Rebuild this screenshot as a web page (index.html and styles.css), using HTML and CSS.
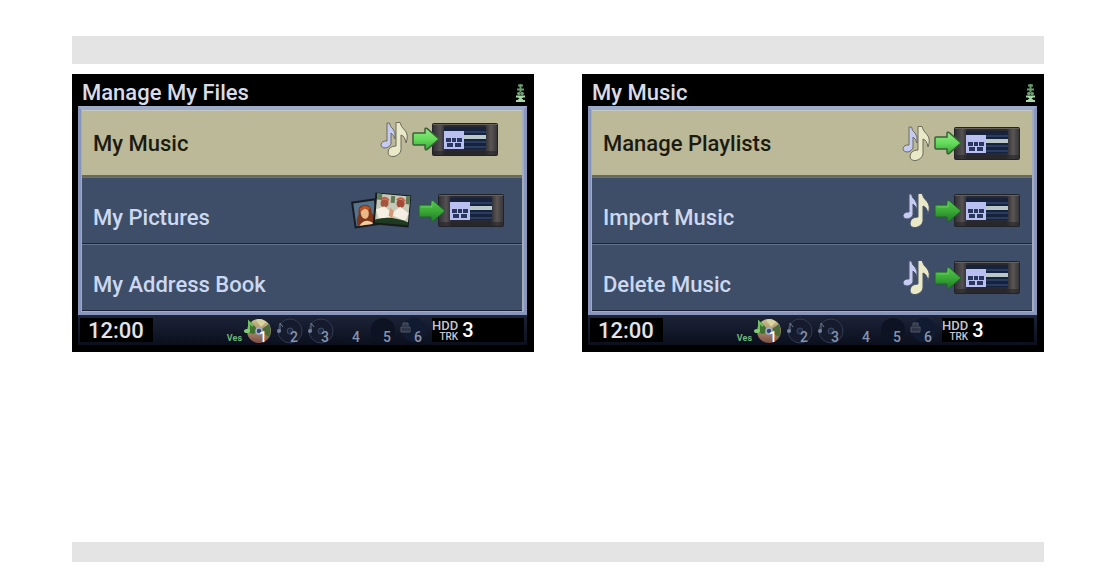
FILE: index.html
```html
<!DOCTYPE html>
<html lang="en">
<head>
  <meta charset="UTF-8">
  <meta name="viewport" content="width=device-width, initial-scale=1">
  <title>Manage My Files</title>
  <link rel="stylesheet" href="styles.css">
</head>
<body>
  <!-- Shared icons -->
  <svg class="sprite" aria-hidden="true">
    <defs>
      <linearGradient id="metal" x1="0" x2="1" y1="0" y2="0">
        <stop offset="0" stop-color="#2f2f34"/>
        <stop offset="0.12" stop-color="#555153"/>
        <stop offset="0.2" stop-color="#292a31"/>
        <stop offset="0.8" stop-color="#292a31"/>
        <stop offset="0.9" stop-color="#5b5654"/>
        <stop offset="1" stop-color="#343337"/>
      </linearGradient>
      <linearGradient id="leaf" x1="0" x2="0" y1="0" y2="1">
        <stop offset="0" stop-color="#55c24e"/>
        <stop offset="0.5" stop-color="#3aa936"/>
        <stop offset="1" stop-color="#1e7a24"/>
      </linearGradient>
      <linearGradient id="leaf-light" x1="0" x2="0" y1="0" y2="1">
        <stop offset="0" stop-color="#8fe884"/>
        <stop offset="0.5" stop-color="#66dd5c"/>
        <stop offset="1" stop-color="#39a337"/>
      </linearGradient>
      <linearGradient id="disc-face" x1="0" x2="0" y1="0" y2="1">
        <stop offset="0" stop-color="#c9c58e"/>
        <stop offset="0.5" stop-color="#a98a6c"/>
        <stop offset="1" stop-color="#7c4f45"/>
      </linearGradient>
    </defs>
    <symbol id="drive" viewBox="0 0 66 33">
      <rect x="0.5" y="0.5" width="65" height="32" rx="1" fill="url(#metal)" stroke="#222329"/>
      <path d="M1 1.5h64" stroke="#65615f"/>
      <path d="M1 28h64v4H1z" fill="#28272a" opacity=".65"/>
      <rect x="12" y="4" width="42" height="22" fill="#17233d"/>
      <path d="M32 9h22M32 19h22M32 24h22" stroke="#2b3c61" stroke-width="2"/>
      <path d="M31 14h23" stroke="#b9c7c8" stroke-width="4"/>
      <rect x="12" y="8" width="20" height="18" fill="#b9bff0"/>
      <path d="M14 15h5v4h-5zM20 15h4v4h-4zM25 15h5v4h-5zM15 20h6v4h-6zM23 20h6v4h-6z" fill="#29375f"/>
    </symbol>
    <symbol id="arrow" viewBox="0 0 30 24">
      <path d="M2 7Q2 6 3 6H14V2.500Q14 0.500 16 1.500L28 12L16 22.500Q14 23.500 14 21V18H3Q2 18 2 17Z" fill="url(#leaf)" stroke="#275c35"/>
      <path d="M4 8h11V4" fill="none" stroke="#7bdd72" stroke-width="1" opacity=".6"/>
    </symbol>
    <symbol id="arrow-light" viewBox="0 0 30 24">
      <path d="M2 7Q2 6 3 6H14V2.500Q14 0.500 16 1.500L28 12L16 22.500Q14 23.500 14 21V18H3Q2 18 2 17Z" fill="url(#leaf-light)" stroke="#3b6037" stroke-width="1.500"/>
    </symbol>
    <symbol id="notes" viewBox="0 0 30 37">
      <g class="note-small">
        <path d="M7 20V2H9.500Q10 6 13 8Q16 11 15 18Q14 14 11 12V23Q10 26 6 27Q1 27 1 23.500Q2 19.500 7 20Z"/>
      </g>
      <g class="note-large">
        <path d="M16 25V1.500H20Q21 6 25 9.500Q29 14 26 22Q25 15 21 14V29Q20 34 14 35.500Q8 36 8 31Q9 25 16 25Z"/>
      </g>
    </symbol>
    <symbol id="photos" viewBox="0 0 62 38">
      <g transform="rotate(-8 14 23)">
        <rect x="3" y="8" width="24" height="27" fill="#171c22"/>
        <rect x="5" y="10" width="21" height="23" fill="#56748e"/>
        <path d="M6 33Q5 27 9 21Q8 13 15 13Q23 13 22 22Q27 29 26 33Z" fill="#7c371d"/>
        <ellipse cx="15" cy="21" rx="4" ry="6" fill="#eab886"/>
        <path d="M8 33Q15 25 23 33Z" fill="#f1cf9c"/>
        <path d="M11 18Q15 13 20 18" stroke="#b75728" stroke-width="3" fill="none"/>
      </g>
      <g transform="rotate(5 43 18)">
        <rect x="24" y="2" width="36" height="32" fill="#171b1b"/>
        <rect x="26" y="3" width="33" height="27" fill="#c5c9b8"/>
        <path d="M26 3h5v6h-5zM55 3h4v8h-4zM40 4h4v7h-4z" fill="#5d7855"/>
        <circle cx="34" cy="12" r="4" fill="#a3553e"/>
        <circle cx="50" cy="11" r="4" fill="#a34a36"/>
        <path d="M30 9Q34 4 38 9M46 8Q50 3 54 8" stroke="#c75a41" stroke-width="2" fill="none"/>
        <path d="M26 19L34 15L42 21L50 14L59 20L56 28L44 24L30 29Z" fill="#f4eee3"/>
        <path d="M40 16l4 3-1 7-4-2z" fill="#d59a79"/>
        <path d="M26 29Q41 23 59 29V32H26Z" fill="#1e3a20"/>
      </g>
    </symbol>
    <symbol id="signal" viewBox="0 0 9 18">
      <path d="M2 1.500h5M4.500 0v4M1 5.500h7M4.500 4v4M1 9.500h7M3 8v3M6 8v3" stroke="#6b9c70" stroke-width="2"/>
      <path d="M0 12.500h9M0 17h9M2 12l5 5M7 12l-5 5" stroke="#a5d9a5" stroke-width="2"/>
    </symbol>
    <symbol id="disc" viewBox="0 0 31 28">
      <circle cx="15" cy="15" r="12" fill="#151b2c" stroke="#303a52"/>
      <circle cx="15" cy="15" r="3" fill="#1c2740" stroke="#3d4b67"/>
      <path d="M5 15V7l3 4" stroke="#6f7d91" fill="none"/>
      <ellipse cx="4" cy="15" rx="2" ry="2" fill="#73849d"/>
    </symbol>
    <symbol id="disc-active" viewBox="0 0 31 28">
      <circle cx="15" cy="15" r="12" fill="url(#disc-face)"/>
      <path d="M15 15L7 6Q3 10 3 16L9 18Z" fill="#42702f"/>
      <path d="M15 15L25 8Q28 15 25 21Z" fill="#4a6c3a"/>
      <path d="M12 4Q17 1 22 6L17 11Z" fill="#d8d3a1"/>
      <circle cx="15" cy="15" r="3" fill="#33436d" stroke="#a9b0d0" stroke-width="1.500"/>
      <path d="M5 15V6l4 4" stroke="#75bd62" stroke-width="2" fill="none"/>
      <ellipse cx="3" cy="15" rx="3" ry="2" fill="#7fce74"/>
    </symbol>
    <symbol id="slot-empty" viewBox="0 0 31 28">
      <circle cx="15" cy="14" r="12" fill="#0d1322"/>
    </symbol>
    <symbol id="slot-card" viewBox="0 0 31 28">
      <circle cx="15" cy="14" r="12" fill="#101a30"/>
      <path d="M2 16V11h9v5zM4 10V7h5v3" fill="#343a4b" stroke="#4f5564"/>
      <path d="M4 12v3M7 12v3M10 12v3" stroke="#262c3b"/>
    </symbol>
  </svg>

  <div class="rule"></div>

  <main class="screens">
    <section class="screen files">
      <header class="screen-title">
        <h2>Manage My Files</h2>
        <svg class="signal"><use href="#signal"/></svg>
      </header>
      <div class="menu">
        <button class="active">
          <span>My Music</span>
          <span class="transfer">
            <svg class="notes"><use href="#notes"/></svg>
            <svg class="arrow"><use href="#arrow-light"/></svg>
            <svg class="drive"><use href="#drive"/></svg>
          </span>
        </button>
        <button>
          <span>My Pictures</span>
          <span class="transfer">
            <svg class="photos"><use href="#photos"/></svg>
            <svg class="arrow"><use href="#arrow"/></svg>
            <svg class="drive"><use href="#drive"/></svg>
          </span>
        </button>
        <button>
          <span>My Address Book</span>
        </button>
      </div>
      <footer class="status">
        <span class="clock">12:00</span>
        <span class="ves">Ves</span>
        <div class="slots">
          <div class="slot on"><svg><use href="#disc-active"/></svg><span>1</span></div>
          <div class="slot"><svg><use href="#disc"/></svg><span>2</span></div>
          <div class="slot"><svg><use href="#disc"/></svg><span>3</span></div>
          <div class="slot"><span>4</span></div>
          <div class="slot"><svg><use href="#slot-empty"/></svg><span>5</span></div>
          <div class="slot"><svg><use href="#slot-card"/></svg><span>6</span></div>
        </div>
        <div class="source">
          <div class="source-name"><span>HDD</span><small>TRK</small></div>
          <span class="track">3</span>
        </div>
      </footer>
    </section>

    <section class="screen music">
      <header class="screen-title">
        <h2>My Music</h2>
        <svg class="signal"><use href="#signal"/></svg>
      </header>
      <div class="menu">
        <button class="active">
          <span>Manage Playlists</span>
          <span class="transfer">
            <svg class="notes"><use href="#notes"/></svg>
            <svg class="arrow"><use href="#arrow-light"/></svg>
            <svg class="drive"><use href="#drive"/></svg>
          </span>
        </button>
        <button>
          <span>Import Music</span>
          <span class="transfer">
            <svg class="notes"><use href="#notes"/></svg>
            <svg class="arrow"><use href="#arrow"/></svg>
            <svg class="drive"><use href="#drive"/></svg>
          </span>
        </button>
        <button>
          <span>Delete Music</span>
          <span class="transfer">
            <svg class="notes"><use href="#notes"/></svg>
            <svg class="arrow"><use href="#arrow"/></svg>
            <svg class="drive"><use href="#drive"/></svg>
          </span>
        </button>
      </div>
      <footer class="status">
        <span class="clock">12:00</span>
        <span class="ves">Ves</span>
        <div class="slots">
          <div class="slot on"><svg><use href="#disc-active"/></svg><span>1</span></div>
          <div class="slot"><svg><use href="#disc"/></svg><span>2</span></div>
          <div class="slot"><svg><use href="#disc"/></svg><span>3</span></div>
          <div class="slot"><span>4</span></div>
          <div class="slot"><svg><use href="#slot-empty"/></svg><span>5</span></div>
          <div class="slot"><svg><use href="#slot-card"/></svg><span>6</span></div>
        </div>
        <div class="source">
          <div class="source-name"><span>HDD</span><small>TRK</small></div>
          <span class="track">3</span>
        </div>
      </footer>
    </section>
  </main>

  <div class="rule rule-bottom"></div>
</body>
</html>
```
FILE: styles.css
```css
* { box-sizing: border-box; margin: 0; padding: 0; }
body {
  font-family: Roboto, "Liberation Sans", sans-serif;
  background: #fff;
  padding: 36px 72px 14px;
  min-height: 100vh;
  display: flex;
  flex-direction: column;
}
.sprite {
  position: absolute;
  width: 0;
  height: 0;
}
.rule {
  height: 28px;
  background: #e4e4e4;
}
.rule-bottom {
  height: 20px;
  margin-top: auto;
}
.screens {
  display: grid;
  grid-template-columns: 1fr 1fr;
  gap: 48px;
  margin: 10px 0;
}
.screen {
  background: #000;
  padding: 0 7px 7px 6px;
}
/* Title bar */
.screen-title {
  display: flex;
  justify-content: space-between;
  align-items: center;
  height: 32px;
  padding: 5px 2px 0 4px;
}
.screen-title h2 {
  font-size: 22px;
  line-height: 28px;
  font-weight: 500;
  color: #d9dbe6;
}
.signal {
  width: 9px;
  height: 18px;
}
/* Menu */
.menu {
  border: 3px solid #8896bd;
  border-top-color: #9eabc9;
  padding: 1px 2px 1px 1px;
  background: #a3abbd;
}
.menu button {
  display: flex;
  justify-content: space-between;
  align-items: center;
  width: 100%;
  height: 67px;
  padding: 0 18px 0 11px;
  border: none;
  border-top: 1px solid #63718a;
  border-bottom: 1px solid #1b2334;
  background: #3e4e69;
  color: #ccd8ef;
  font-family: inherit;
  font-size: 22px;
  line-height: 28px;
  font-weight: 500;
  cursor: pointer;
}
.menu button > span:first-child {
  padding-top: 14px;
}
.menu button.active {
  background: #bcb998;
  border-top-color: #c3c9c0;
  border-bottom: 2px solid #67695d;
  color: #1c1b12;
}
.menu button.active > span:first-child {
  padding-top: 2px;
}
.files button.active {
  padding-right: 24px;
}
.files .active .transfer {
  padding-bottom: 8px;
}
.music button {
  padding-right: 12px;
}
/* Icons */
.transfer {
  display: flex;
  align-items: center;
}
.notes {
  width: 30px;
  height: 37px;
}
.photos {
  width: 62px;
  height: 38px;
  margin-right: 4px;
}
.arrow {
  width: 30px;
  height: 24px;
  margin-left: 1px;
  z-index: 1;
}
.drive {
  width: 66px;
  height: 33px;
  margin-left: -9px;
}
.note-small { fill: #c5cbf3; }
.note-large { fill: #e9e8c7; }
.notes { stroke: #4b5569; }
.active .notes { stroke: #6c6b5c; }
/* Status bar */
.status {
  display: flex;
  align-items: center;
  height: 30px;
  padding: 0 3px 0 2px;
  background: linear-gradient(#1d2439, #0b0f1d);
}
.clock {
  width: 73px;
  height: 24px;
  padding-left: 8px;
  background: #000;
  color: #e2e2e8;
  font-size: 22px;
  line-height: 26px;
  font-weight: 500;
}
.ves {
  margin-left: auto;
  align-self: flex-end;
  color: #69b576;
  font-size: 9px;
  line-height: 14px;
  font-weight: 700;
}
.slots {
  display: flex;
  margin-left: 2px;
}
.slot {
  display: grid;
  width: 31px;
  height: 28px;
  color: #8792ac;
  font-size: 14px;
  line-height: 14px;
  font-weight: 500;
}
.slot svg,
.slot span {
  grid-area: 1 / 1;
}
.slot svg {
  width: 31px;
  height: 28px;
}
.slot span {
  align-self: end;
  padding-left: 15px;
  z-index: 1;
}
.slot.on {
  color: #fff;
}
.source {
  display: flex;
  align-items: center;
  gap: 4px;
  width: 92px;
  height: 24px;
  margin-left: 2px;
  background: #000;
  color: #c3c5d2;
}
.source-name {
  display: flex;
  flex-direction: column;
  align-items: flex-end;
  padding-top: 2px;
  font-size: 13px;
  line-height: 12px;
  font-weight: 500;
}
.source-name small {
  font-size: 10px;
  line-height: 10px;
}
.track {
  color: #fff;
  font-size: 20px;
  line-height: 24px;
  font-weight: 500;
}
@media (max-width: 800px) {
  body { padding: 20px; }
  .screens { grid-template-columns: 1fr; gap: 20px; }
}
```
